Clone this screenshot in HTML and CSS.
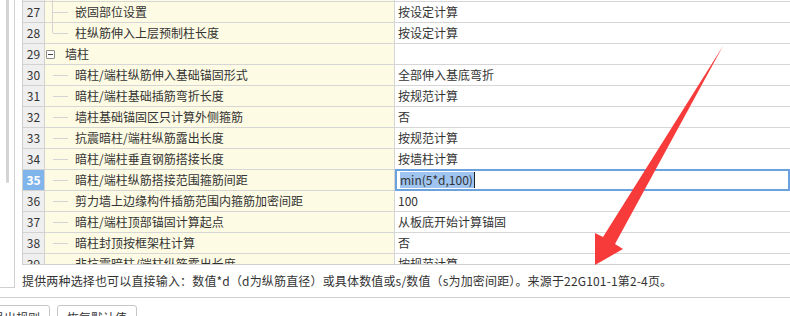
FILE: index.html
```html
<!DOCTYPE html>
<html lang="zh-CN">
<head>
    <meta charset="UTF-8">
    <title>计算设置 - 墙柱</title>
    <link rel="stylesheet" href="styles.css">
</head>
<body>
    <div class="page">
        <div class="content">
            <!-- 左侧面板（只露出一条边） -->
            <div class="side-panel">
                <div class="side-thumb"></div>
            </div>

            <div class="main">
                <!-- 设置表格 -->
                <div class="grid">
                    <div class="row row-first">
                        <div class="cell num"></div>
                        <div class="cell name child line-full"><span class="tree-line"></span></div>
                        <div class="cell value"></div>
                    </div>
                    <div class="row">
                        <div class="cell num">27</div>
                        <div class="cell name child line-full"><span class="tree-line"></span>嵌固部位设置</div>
                        <div class="cell value">按设定计算</div>
                    </div>
                    <div class="row">
                        <div class="cell num">28</div>
                        <div class="cell name child line-end"><span class="tree-line"></span>柱纵筋伸入上层预制柱长度</div>
                        <div class="cell value">按设定计算</div>
                    </div>
                    <div class="row">
                        <div class="cell num">29</div>
                        <div class="cell name group"><span class="toggle"></span>墙柱</div>
                        <div class="cell value"></div>
                    </div>
                    <div class="row">
                        <div class="cell num">30</div>
                        <div class="cell name child"><span class="tree-line"></span>暗柱/端柱纵筋伸入基础锚固形式</div>
                        <div class="cell value">全部伸入基底弯折</div>
                    </div>
                    <div class="row">
                        <div class="cell num">31</div>
                        <div class="cell name child"><span class="tree-line"></span>暗柱/端柱基础插筋弯折长度</div>
                        <div class="cell value">按规范计算</div>
                    </div>
                    <div class="row">
                        <div class="cell num">32</div>
                        <div class="cell name child"><span class="tree-line"></span>墙柱基础锚固区只计算外侧箍筋</div>
                        <div class="cell value">否</div>
                    </div>
                    <div class="row">
                        <div class="cell num">33</div>
                        <div class="cell name child"><span class="tree-line"></span>抗震暗柱/端柱纵筋露出长度</div>
                        <div class="cell value">按规范计算</div>
                    </div>
                    <div class="row">
                        <div class="cell num">34</div>
                        <div class="cell name child"><span class="tree-line"></span>暗柱/端柱垂直钢筋搭接长度</div>
                        <div class="cell value">按墙柱计算</div>
                    </div>
                    <div class="row">
                        <div class="cell num selected">35</div>
                        <div class="cell name child"><span class="tree-line"></span>暗柱/端柱纵筋搭接范围箍筋间距</div>
                        <div class="cell value editing">
                            <div class="editor"><span class="editor-text">min(5*d,100)</span><span class="caret"></span></div>
                        </div>
                    </div>
                    <div class="row">
                        <div class="cell num">36</div>
                        <div class="cell name child"><span class="tree-line"></span>剪力墙上边缘构件插筋范围内箍筋加密间距</div>
                        <div class="cell value">100</div>
                    </div>
                    <div class="row">
                        <div class="cell num">37</div>
                        <div class="cell name child"><span class="tree-line"></span>暗柱/端柱顶部锚固计算起点</div>
                        <div class="cell value">从板底开始计算锚固</div>
                    </div>
                    <div class="row">
                        <div class="cell num">38</div>
                        <div class="cell name child"><span class="tree-line"></span>暗柱封顶按框架柱计算</div>
                        <div class="cell value">否</div>
                    </div>
                    <div class="row">
                        <div class="cell num">39</div>
                        <div class="cell name child"><span class="tree-line"></span>非抗震暗柱/端柱纵筋露出长度</div>
                        <div class="cell value">按规范计算</div>
                    </div>
                </div>

                <!-- 说明文字 -->
                <p class="hint">提供两种选择也可以直接输入：数值*d（d为纵筋直径）或具体数值或s/数值（s为加密间距）。来源于22G101-1第2-4页。</p>
            </div>
        </div>

        <!-- 底部按钮 -->
        <div class="footer">
            <button class="btn btn-export">导出规则</button>
            <button class="btn">恢复默认值</button>
        </div>

        <!-- 红色标注箭头 -->
        <svg class="arrow" width="790" height="316" viewBox="0 0 790 316">
            <polygon points="723,46 615,244 623,249 595,265 595,233 603,237" fill="#f73b3b"/>
        </svg>
    </div>
</body>
</html>
```

FILE: styles.css
```css
* {
    margin: 0;
    padding: 0;
    box-sizing: border-box;
}

body {
    font-family: 'Microsoft YaHei', 'Noto Sans CJK SC', sans-serif;
    font-size: 12px;
    color: #333;
    background: #fff;
    overflow: hidden;
}

.page {
    position: relative;
    width: 790px;
    height: 316px;
    overflow: hidden;
}

.content {
    display: flex;
    gap: 7px;
    height: 297px;
}

/* 左侧面板 */
.side-panel {
    width: 15px;
    height: 288px;
    border-right: 1px solid #d0d0d0;
    border-bottom: 1px solid #d0d0d0;
    padding-left: 6px;
}

.side-thumb {
    width: 3px;
    height: 183px;
    background: #d4d4d4;
    border-radius: 0 0 2px 2px;
}

.main {
    flex: 1;
    display: flex;
    flex-direction: column;
}

/* 表格 */
.grid {
    height: 265px;
    border-left: 1px solid #cfcfcf;
    border-bottom: 1px solid #cfcfcf;
    overflow: hidden;
}

.row {
    display: grid;
    grid-template-columns: 22px 350px 1fr;
    height: 21px;
}

.row-first {
    margin-top: -19px;
}

.cell {
    border-right: 1px solid #d6d6d6;
    border-bottom: 1px solid #d6d6d6;
    line-height: 20px;
    white-space: nowrap;
    overflow: hidden;
}

.num {
    background: #efefef;
    text-align: center;
    border-color: #d2d2d2;
}

.num.selected {
    background: #80b5ec;
    color: #fff;
    font-weight: bold;
}

.name {
    position: relative;
    background: #fefbe4;
    display: flex;
    align-items: center;
}

.value {
    border-right: none;
    padding-left: 3px;
}

/* 树形连线 */
.tree-line {
    width: 15px;
    height: 1px;
    background: #d4d4d4;
    margin-left: 8px;
    margin-right: 7px;
    flex-shrink: 0;
}

.line-full::before,
.line-end::before {
    content: "";
    position: absolute;
    left: 7px;
    top: 0;
    width: 1px;
    background: #d4d4d4;
}

.line-full::before {
    bottom: 0;
}

.line-end::before {
    height: 10px;
}

.toggle {
    position: relative;
    width: 9px;
    height: 9px;
    margin-left: 1px;
    margin-right: 10px;
    border: 1px solid #8c8c8c;
    border-radius: 1px;
    background: #fff;
    flex-shrink: 0;
}

.toggle::after {
    content: "";
    position: absolute;
    left: 1px;
    top: 3px;
    width: 5px;
    height: 1px;
    background: #444;
}

/* 编辑中的单元格 */
.editing {
    position: relative;
    padding-left: 0;
    overflow: visible;
}

.editor {
    position: absolute;
    top: -1px;
    bottom: -1px;
    left: 0;
    right: 0;
    border: 2px solid #6ba1dd;
    background: #fff;
    padding-left: 3px;
    display: flex;
    align-items: center;
}

.editor-text {
    background: #9ec4ef;
    line-height: 16px;
    padding-right: 1px;
}

.caret {
    width: 1px;
    height: 16px;
    background: #222;
}

.hint {
    flex: 1;
    line-height: 32px;
    letter-spacing: 0.16px;
    white-space: nowrap;
}

/* 底部按钮 */
.footer {
    display: flex;
    gap: 7px;
    border-top: 1px solid #d0d0d0;
    padding-top: 7px;
}

.btn {
    height: 24px;
    padding: 0 9px;
    font-family: inherit;
    font-size: 12px;
    color: #333;
    background: #fff;
    border: 1px solid #c6c6c6;
    border-radius: 3px;
}

.btn-export {
    margin-left: -18px;
}

/* 标注箭头 */
.arrow {
    position: absolute;
    top: 0;
    left: 0;
    pointer-events: none;
}
```
